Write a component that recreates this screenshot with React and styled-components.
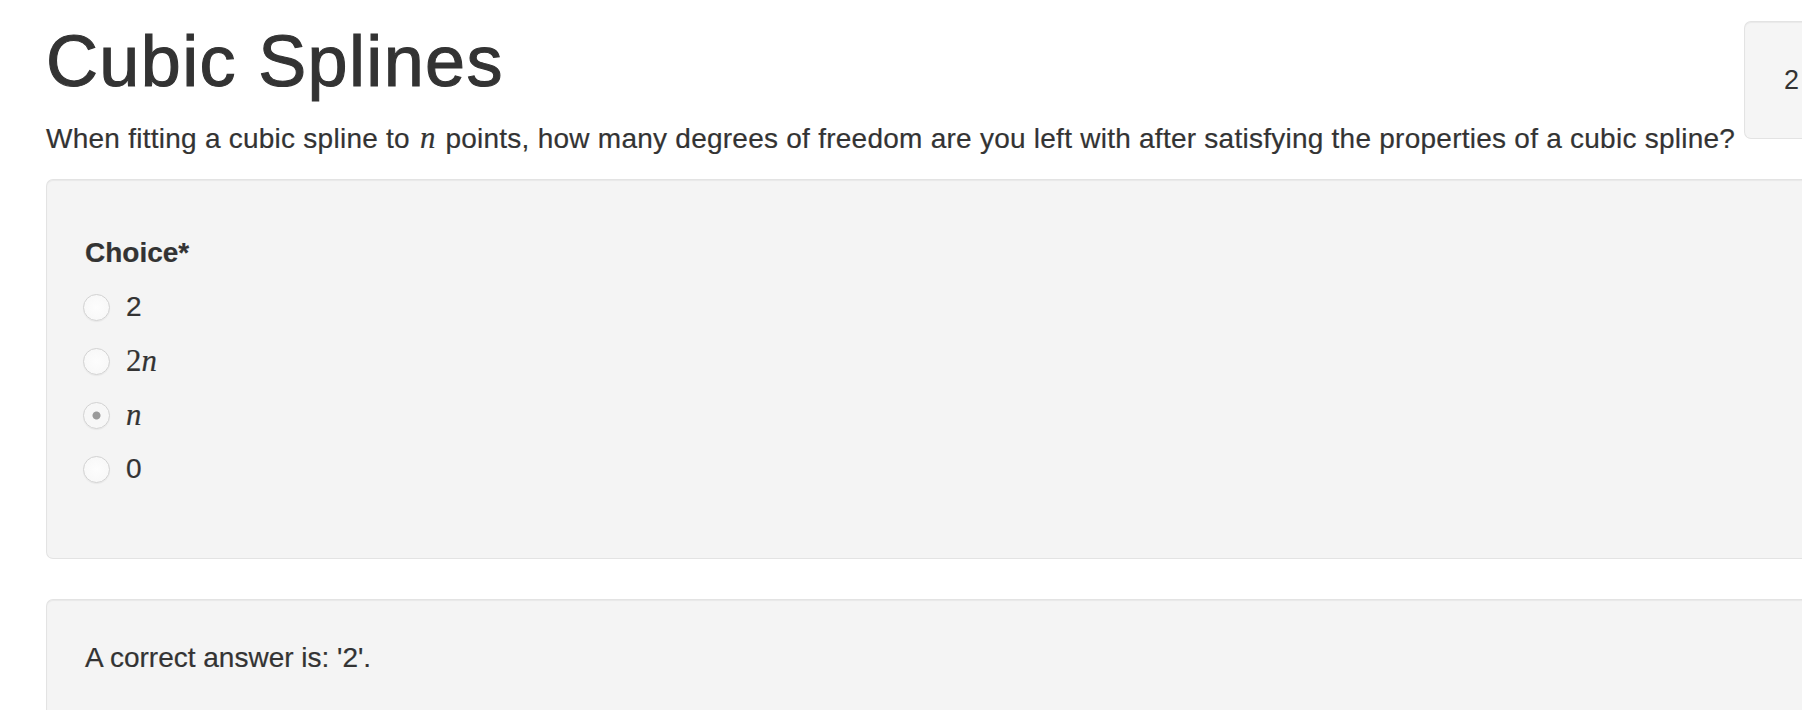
import React from "react";
import styled, { createGlobalStyle } from "styled-components";

const GlobalStyle = createGlobalStyle`
  html, body {
    margin: 0;
    padding: 0;
    background: #fff;
    overflow: hidden;
  }
  body {
    font-family: "Liberation Sans", Arial, sans-serif;
    color: #333;
  }
`;

const Page = styled.div`
  width: calc(100% + 80px);
  padding-left: 46px;
  box-sizing: border-box;
`;

const Header = styled.div`
  display: flex;
  align-items: flex-start;
`;

const HeaderText = styled.div`
  flex: 1;
  min-width: 0;
`;

const Title = styled.h1`
  margin: 21px 0 16px;
  font-size: 72px;
  font-weight: 400;
  line-height: 81px;
  letter-spacing: 1.35px;
  color: #333;
  -webkit-text-stroke: 1.1px #333;
`;

const Question = styled.p`
  margin: 0;
  font-size: 28px;
  line-height: 40px;
  letter-spacing: 0.25px;
  white-space: nowrap;
  -webkit-text-stroke: 0.2px #333;
`;

const Math = styled.span`
  font-family: "Liberation Serif", "Times New Roman", serif;
  font-size: 1.1em;
  letter-spacing: 0;
  margin: 0 ${props => (props.pad ? "2px" : "0")};
`;

const Var = styled.i`
  font-style: italic;
`;

const PointsBox = styled.div`
  width: 138px;
  height: 118px;
  margin-top: 21px;
  box-sizing: border-box;
  padding-left: 39px;
  display: flex;
  align-items: center;
  background: #f5f5f5;
  border: 1px solid #e3e3e3;
  border-right: none;
  border-radius: 7px 0 0 7px;
  box-shadow: inset 0 1px 1px rgba(0, 0, 0, 0.05);
  font-size: 27px;
`;

const Well = styled.div`
  margin-top: ${props => props.top}px;
  padding: 38px;
  padding-bottom: ${props => props.bottom}px;
  background: #f4f4f4;
  border: 1px solid #e3e3e3;
  border-right: none;
  border-radius: 7px 0 0 7px;
  box-shadow: inset 0 1px 1px rgba(0, 0, 0, 0.05);
  font-size: 28px;
  line-height: 40px;
  -webkit-text-stroke: 0.2px #333;
`;

const Form = styled.div`
  margin-top: 15px;
`;

const Label = styled.div`
  font-weight: 700;
  margin-bottom: 7px;
`;

const Option = styled.label`
  display: flex;
  align-items: center;
  height: 54px;
`;

const Radio = styled.input.attrs({ type: "radio" })`
  appearance: none;
  -webkit-appearance: none;
  width: 27px;
  height: 27px;
  margin: 0 16px 0 -2px;
  border-radius: 50%;
  border: 1px solid #d2d2d2;
  box-sizing: border-box;
  background: radial-gradient(circle, #fdfdfd 0, #f6f6f6 100%);
  box-shadow: 0 1px 1px rgba(0, 0, 0, 0.05);
  &:checked {
    background: radial-gradient(circle, #9a9a9a 0 3.5px, #f7f7f7 4.5px);
  }
`;

const choices = [
  { key: "2", label: "2" },
  { key: "2n", label: <Math>2<Var>n</Var></Math> },
  { key: "n", label: <Math><Var>n</Var></Math>, checked: true },
  { key: "0", label: "0" },
];

export default function App() {
  return (
    <>
      <GlobalStyle />
      <Page>
        <Header>
          <HeaderText>
            <Title>Cubic Splines</Title>
            <Question>
              When fitting a cubic spline to <Math pad><Var>n</Var></Math> points,
              how many degrees of freedom are you left with after satisfying the
              properties of a cubic spline?
            </Question>
          </HeaderText>
          <PointsBox>2</PointsBox>
        </Header>
        <Well top={20} bottom={62}>
          <Form>
            <Label>Choice*</Label>
            {choices.map(c => (
              <Option key={c.key}>
                <Radio name="choice" disabled defaultChecked={!!c.checked} />
                <span>{c.label}</span>
              </Option>
            ))}
          </Form>
        </Well>
        <Well top={40} bottom={38}>
          A correct answer is: '2'.
        </Well>
      </Page>
    </>
  );
}
